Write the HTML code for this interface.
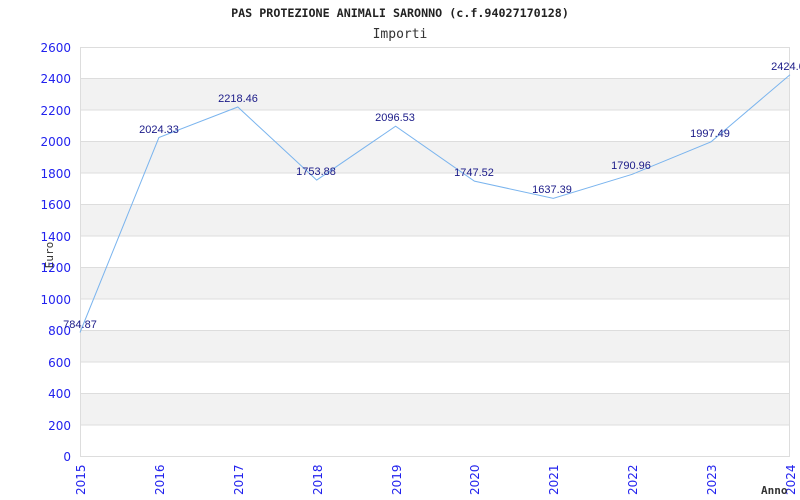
<!DOCTYPE html>
<html><head><meta charset="utf-8"><style>body{margin:0;background:#fff}svg{display:block}</style></head><body>
<svg width="800" height="500" xmlns="http://www.w3.org/2000/svg">
<rect width="800" height="500" fill="#fff"/>
<text x="400" y="17" text-anchor="middle" font-family="DejaVu Sans Mono, monospace" font-size="11.7" font-weight="bold" fill="#222">PAS PROTEZIONE ANIMALI SARONNO (c.f.94027170128)</text>
<text x="400" y="38" text-anchor="middle" font-family="DejaVu Sans Mono, monospace" font-size="13" fill="#333">Importi</text>
<g fill="#f2f2f2">
<rect x="80" y="78.5" width="710" height="31.5"/>
<rect x="80" y="141.4" width="710" height="31.5"/>
<rect x="80" y="204.3" width="710" height="31.5"/>
<rect x="80" y="267.3" width="710" height="31.5"/>
<rect x="80" y="330.2" width="710" height="31.5"/>
<rect x="80" y="393.1" width="710" height="31.5"/>
</g>
<g stroke="#ddd" stroke-width="1">
<line x1="80" x2="790" y1="78.5" y2="78.5"/><line x1="80" x2="790" y1="110" y2="110"/>
<line x1="80" x2="790" y1="141.5" y2="141.5"/><line x1="80" x2="790" y1="173" y2="173"/>
<line x1="80" x2="790" y1="204.5" y2="204.5"/><line x1="80" x2="790" y1="236" y2="236"/>
<line x1="80" x2="790" y1="267.5" y2="267.5"/><line x1="80" x2="790" y1="299" y2="299"/>
<line x1="80" x2="790" y1="330.5" y2="330.5"/><line x1="80" x2="790" y1="362" y2="362"/>
<line x1="80" x2="790" y1="393.5" y2="393.5"/><line x1="80" x2="790" y1="425" y2="425"/>
<rect x="80.5" y="47.5" width="709" height="409" fill="none"/>
</g>
<g font-family="DejaVu Sans, sans-serif" font-size="12" fill="#2222ee" text-anchor="end">
<text x="71" y="52">2600</text><text x="71" y="83">2400</text><text x="71" y="115">2200</text>
<text x="71" y="146">2000</text><text x="71" y="178">1800</text><text x="71" y="209">1600</text>
<text x="71" y="241">1400</text><text x="71" y="272">1200</text><text x="71" y="304">1000</text>
<text x="71" y="335">800</text><text x="71" y="367">600</text><text x="71" y="398">400</text>
<text x="71" y="430">200</text><text x="71" y="461">0</text>
</g>
<g font-family="DejaVu Sans, sans-serif" font-size="12" fill="#2222ee">
<text transform="translate(85,495) rotate(-90)">2015</text>
<text transform="translate(164,495) rotate(-90)">2016</text>
<text transform="translate(243,495) rotate(-90)">2017</text>
<text transform="translate(322,495) rotate(-90)">2018</text>
<text transform="translate(401,495) rotate(-90)">2019</text>
<text transform="translate(479,495) rotate(-90)">2020</text>
<text transform="translate(558,495) rotate(-90)">2021</text>
<text transform="translate(637,495) rotate(-90)">2022</text>
<text transform="translate(716,495) rotate(-90)">2023</text>
<text transform="translate(795,495) rotate(-90)">2024</text>
</g>
<text transform="translate(53,255) rotate(-90)" text-anchor="middle" font-family="DejaVu Sans Mono, monospace" font-size="11" fill="#333">Euro</text>
<text x="761" y="494" font-family="DejaVu Sans Mono, monospace" font-size="11" font-weight="bold" fill="#333">Anno</text>
<polyline fill="none" stroke="#7ab4ee" stroke-width="1" points="80,332.5 158.9,137.5 237.8,107 316.7,180.1 395.6,126.2 474.4,181.1 553.3,198.4 632.2,174.3 711.1,141.8 790,74.7"/>
<g font-family="Liberation Sans, sans-serif" font-size="11" fill="#1a1a88" text-anchor="middle">
<text x="80" y="328">784.87</text>
<text x="159" y="133">2024.33</text>
<text x="238" y="102">2218.46</text>
<text x="316" y="175">1753.88</text>
<text x="395" y="121">2096.53</text>
<text x="474" y="176">1747.52</text>
<text x="552" y="193">1637.39</text>
<text x="631" y="169">1790.96</text>
<text x="710" y="137">1997.49</text>
<text x="788" y="70">2424.0</text>
</g>
</svg>
</body></html>
